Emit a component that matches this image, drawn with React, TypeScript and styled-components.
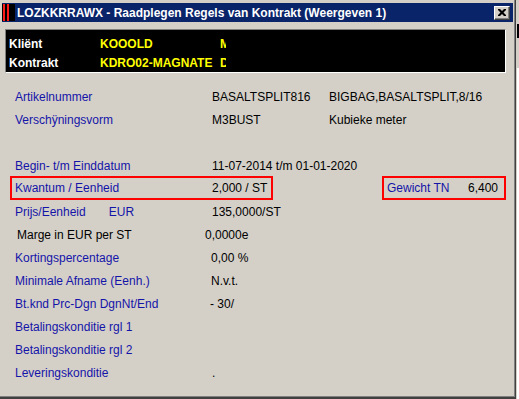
import React from "react";
import styled, { createGlobalStyle } from "styled-components";

const Global = createGlobalStyle`
  html, body { margin: 0; padding: 0; background: #ffffff; overflow: hidden; }
  body { font-family: "Liberation Sans", Arial, sans-serif; }
`;

const Desktop = styled.div`
  display: flex;
  width: 519px;
  height: 399px;
  overflow: hidden;
`;

const Window = styled.div`
  box-sizing: border-box;
  width: 516px;
  height: 399px;
  flex: none;
  background: #d4d0c8;
  border-right: 1px solid #404040;
  border-bottom: 2px solid #404040;
  box-shadow: inset -1px -1px 0 #808080;
  padding: 3px 2px 0 2px;
  display: flex;
  flex-direction: column;
`;

const BackStrip = styled.div`
  flex: 1;
  display: flex;
  flex-direction: column;
  background: #ffffff;
  border-left: 1px solid #d4d0c8;
`;

const StripBlock = styled.div<{ $h: number; $c: string }>`
  height: ${(p) => p.$h}px;
  background: ${(p) => p.$c};
  flex: none;
`;

const TitleBar = styled.div`
  height: 19px;
  background: #0a246a;
  display: flex;
  align-items: center;
  flex: none;
`;

const AppIcon = styled.div`
  width: 13px;
  height: 17px;
  background: #000;
  display: flex;
  gap: 2px;
  padding-left: 1px;
  box-sizing: border-box;
  align-self: flex-start;
  margin-top: 1px;
`;

const IconBar = styled.span`
  width: 2px;
  height: 100%;
  background: #ff1a1a;
`;

const TitleText = styled.span`
  margin-left: 2px;
  color: #ffffff;
  font-weight: bold;
  font-size: 12px;
  white-space: nowrap;
`;

const CloseButton = styled.div`
  margin-left: auto;
  margin-right: 3px;
  width: 16px;
  height: 14px;
  box-sizing: border-box;
  background: #d4d0c8;
  border-top: 1px solid #ffffff;
  border-left: 1px solid #ffffff;
  border-right: 1px solid #404040;
  border-bottom: 1px solid #404040;
  box-shadow: inset -1px -1px 0 #808080;
  display: flex;
  align-items: center;
  justify-content: center;
`;

const InfoPanel = styled.div`
  margin: 7px 0 0 3px;
  width: 501px;
  height: 44px;
  box-sizing: border-box;
  background: #000;
  border-top: 1px solid #808080;
  border-left: 1px solid #808080;
  border-right: 1px solid #ffffff;
  border-bottom: 1px solid #ffffff;
  padding: 4px 0 0 3px;
  flex: none;
`;

const InfoRow = styled.div`
  display: grid;
  grid-template-columns: 91px 120px 6px;
  height: 19px;
  align-items: center;
  font-size: 12px;
  font-weight: bold;
  white-space: nowrap;
`;

const InfoLabel = styled.span`
  color: #ffffff;
`;

const InfoValue = styled.span`
  color: #ffff00;
  overflow: hidden;
`;

const Details = styled.div`
  padding: 12px 0 0 13px;
  display: flex;
  flex-direction: column;
  font-size: 12px;
`;

const Row = styled.div`
  display: grid;
  grid-template-columns: 197px 117px 1fr;
  height: 23px;
  align-items: center;
  white-space: nowrap;
`;

const BoxRow = styled.div`
  display: flex;
  height: 23px;
  align-items: flex-start;
  white-space: nowrap;
`;

const Label = styled.span<{ $shift?: number; $plain?: boolean }>`
  color: ${(p) => (p.$plain ? "#000000" : "#1414a8")};
  padding-left: ${(p) => p.$shift ?? 0}px;
  display: flex;
`;

const Currency = styled.span`
  margin-left: 23px;
`;

const Value = styled.span<{ $shift?: number }>`
  color: #000000;
  margin-left: ${(p) => p.$shift ?? 0}px;
`;

const Highlight = styled.div<{ $width: number; $offset: number }>`
  box-sizing: border-box;
  width: ${(p) => p.$width}px;
  height: 24px;
  margin-top: -1px;
  margin-left: ${(p) => p.$offset}px;
  border: 2px solid #ff0000;
  display: flex;
  align-items: center;
  padding-left: 3px;
`;

const QtyLabel = styled.span`
  width: 197px;
  color: #1414a8;
`;

const WeightBox = styled(Highlight)`
  justify-content: space-between;
  padding-right: 6px;
`;

const WeightLabel = styled.span`
  color: #1414a8;
`;

type Line = {
  label: string;
  value?: string;
  extra?: string;
  labelShift?: number;
  valueShift?: number;
  plain?: boolean;
  currency?: string;
};

const before: Line[] = [
  { label: "Artikelnummer", value: "BASALTSPLIT816", extra: "BIGBAG,BASALTSPLIT,8/16" },
  { label: "Verschÿningsvorm", value: "M3BUST", extra: "Kubieke meter" },
  { label: "" },
  { label: "Begin- t/m Einddatum", value: "11-07-2014 t/m 01-01-2020" },
];

const after: Line[] = [
  { label: "Prijs/Eenheid", currency: "EUR", value: "135,0000/ST" },
  { label: "Marge in EUR per ST", value: "0,0000e", labelShift: 2, valueShift: -7, plain: true },
  { label: "Kortingspercentage", value: "0,00 %", valueShift: -1 },
  { label: "Minimale Afname (Eenh.)", value: "N.v.t.", valueShift: -1 },
  { label: "Bt.knd Prc-Dgn DgnNt/End", value: "- 30/", valueShift: -2 },
  { label: "Betalingskonditie rgl 1" },
  { label: "Betalingskonditie rgl 2" },
  { label: "Leveringskonditie", value: "." },
];

const renderLine = (l: Line, i: number) => (
  <Row key={i}>
    <Label $shift={l.labelShift} $plain={l.plain}>
      {l.label}
      {l.currency && <Currency>{l.currency}</Currency>}
    </Label>
    <Value $shift={l.valueShift}>{l.value ?? ""}</Value>
    <Value>{l.extra ?? ""}</Value>
  </Row>
);

export default function App() {
  return (
    <>
      <Global />
      <Desktop>
        <Window>
          <TitleBar>
            <AppIcon>
              <IconBar />
              <IconBar />
            </AppIcon>
            <TitleText>LOZKKRRAWX - Raadplegen Regels van Kontrakt (Weergeven 1)</TitleText>
            <CloseButton>
              <svg width="8" height="7" viewBox="0 0 8 7">
                <path d="M0 0h2l2 2 2-2h2v1L5.5 3.5 8 6v1H6L4 5 2 7H0V6l2.5-2.5L0 1z" fill="#000" />
              </svg>
            </CloseButton>
          </TitleBar>
          <InfoPanel>
            <InfoRow>
              <InfoLabel>Kliënt</InfoLabel>
              <InfoValue>KOOOLD</InfoValue>
              <InfoValue>M</InfoValue>
            </InfoRow>
            <InfoRow>
              <InfoLabel>Kontrakt</InfoLabel>
              <InfoValue>KDRO02-MAGNATE</InfoValue>
              <InfoValue>D</InfoValue>
            </InfoRow>
          </InfoPanel>
          <Details>
            {before.map(renderLine)}
            <BoxRow>
              <Highlight $width={263} $offset={-5}>
                <QtyLabel>Kwantum / Eenheid</QtyLabel>
                <Value>2,000 / ST</Value>
              </Highlight>
              <WeightBox $width={124} $offset={109}>
                <WeightLabel>Gewicht TN</WeightLabel>
                <Value>6,400</Value>
              </WeightBox>
            </BoxRow>
            {after.map(renderLine)}
          </Details>
        </Window>
        <BackStrip>
          <StripBlock $h={24} $c="#d4d0c8" />
          <StripBlock $h={14} $c="#000000" />
          <StripBlock $h={30} $c="#d4d0c8" />
        </BackStrip>
      </Desktop>
    </>
  );
}
